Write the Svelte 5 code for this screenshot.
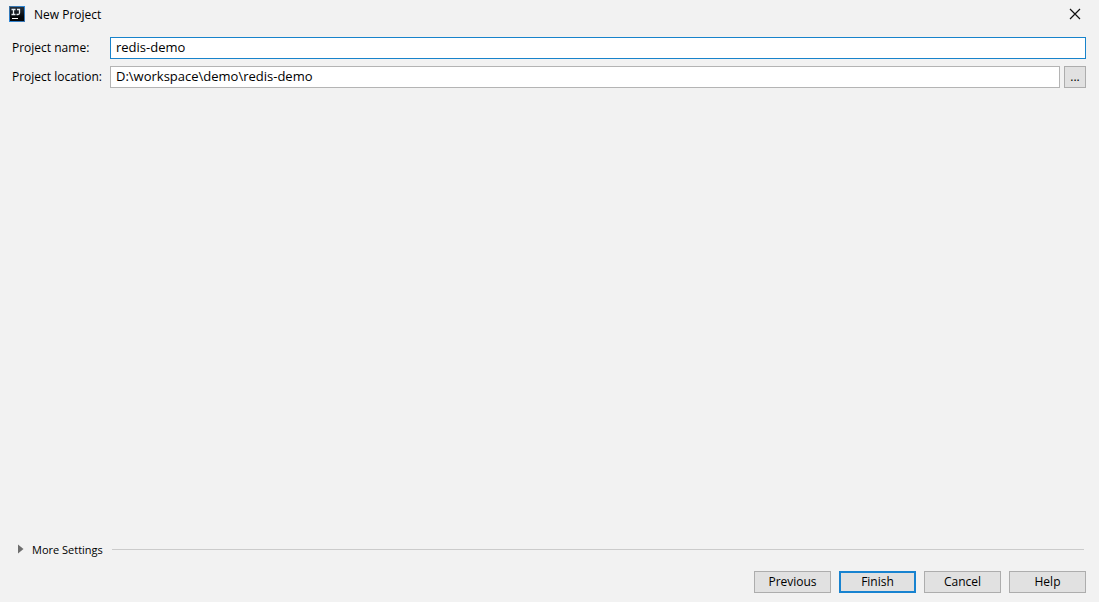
<script>
  let name = $state('redis-demo');
  let location = $state('D:\\workspace\\demo\\redis-demo');
  let expanded = $state(false);
</script>

<main class="dialog">
  <header class="titlebar">
    <svg class="logo" viewBox="0 0 16 16" width="16" height="16" aria-hidden="true">
      <defs>
        <linearGradient id="edge" x1="0" y1="0" x2="1" y2="1">
          <stop offset="0" stop-color="#3f6f9c" />
          <stop offset="0.5" stop-color="#2b86d8" />
          <stop offset="1" stop-color="#3d76b0" />
        </linearGradient>
        <linearGradient id="face" x1="0" y1="0" x2="0" y2="1">
          <stop offset="0" stop-color="#26303c" />
          <stop offset="0.7" stop-color="#05070a" />
        </linearGradient>
      </defs>
      <rect width="16" height="16" fill="url(#edge)" />
      <rect x="1" y="1" width="14" height="14" fill="url(#face)" />
      <path d="M2.500 3.500h4M4.500 3.500v5M2.500 8.500h4M8 3.500h2.500v3.500q0 1.500-1.500 1.500H7.500" fill="none" stroke="#e8edf2" stroke-width="1.300" />
      <rect x="3" y="12" width="6" height="1" fill="#fff" />
    </svg>
    <h1>New Project</h1>
    <button class="close" type="button" aria-label="Close">
      <svg viewBox="0 0 12 12" width="12" height="12" aria-hidden="true">
        <path d="M1 1l10 10M11 1L1 11" fill="none" stroke="#111" stroke-width="1.200" />
      </svg>
    </button>
  </header>

  <form class="fields" onsubmit={(e) => e.preventDefault()}>
    <label for="project-name">Project name:</label>
    <input id="project-name" class="active" type="text" spellcheck="false" bind:value={name} />
    <label for="project-location">Project location:</label>
    <div class="path">
      <input id="project-location" type="text" spellcheck="false" bind:value={location} />
      <button class="btn browse" type="button" aria-label="Browse">...</button>
    </div>
  </form>

  <section class="more">
    <button class="toggle" type="button" aria-expanded={expanded} onclick={() => (expanded = !expanded)}>
      <svg class="arrow" class:open={expanded} viewBox="0 0 6 10" width="6" height="10" aria-hidden="true">
        <path d="M0 0.500L5.500 5L0 9.500Z" fill="#6e6e6e" />
      </svg>
      <span>More Settings</span>
    </button>
    <div class="rule"></div>
  </section>

  <footer class="actions">
    <button class="btn" type="button">Previous</button>
    <button class="btn primary" type="button">Finish</button>
    <button class="btn" type="button">Cancel</button>
    <button class="btn" type="button">Help</button>
  </footer>
</main>

<style>
  :global(body) {
    background: #f2f2f2;
  }
  .dialog {
    box-sizing: border-box;
    display: flex;
    flex-direction: column;
    min-height: 100vh;
    padding-bottom: 9px;
    background: #f2f2f2;
    color: #000;
    font: 12px/18px "Open Sans", "Noto Sans", sans-serif;
  }
  .titlebar {
    display: flex;
    align-items: center;
    gap: 9px;
    height: 28px;
    padding: 0 15px 0 9px;
  }
  .logo,
  .close svg,
  .arrow {
    display: block;
    flex: none;
  }
  h1 {
    flex: 1;
    margin: 0;
    padding-top: 2px;
    font-size: 12px;
    font-weight: 400;
  }
  button {
    font: inherit;
    color: inherit;
    cursor: default;
  }
  .close,
  .toggle {
    padding: 0;
    border: 0;
    background: none;
  }
  .close {
    padding: 3px;
  }
  .fields {
    display: grid;
    grid-template-columns: 98px 1fr;
    row-gap: 7px;
    align-items: center;
    margin: 9px 13px 0 12px;
  }
  .path {
    display: flex;
    gap: 4px;
  }
  input {
    box-sizing: border-box;
    flex: 1;
    min-width: 0;
    width: 100%;
    height: 22px;
    padding: 0 5px 2px;
    border: 1px solid #b4b4b4;
    border-radius: 0;
    outline: 0;
    background: #fff;
    color: #000;
    font: inherit;
    font-size: 13px;
  }
  input.active {
    border-color: #1883cb;
  }
  .btn {
    box-sizing: border-box;
    width: 77px;
    height: 22px;
    padding: 0;
    border: 1px solid #adadad;
    border-radius: 0;
    background: #e1e1e1;
  }
  .btn.browse {
    width: 22px;
  }
  .btn.primary {
    border: 2px solid #1883d0;
  }
  .more {
    display: flex;
    align-items: center;
    gap: 9px;
    margin: auto 15px 0 18px;
  }
  .toggle {
    display: flex;
    align-items: center;
    gap: 8px;
    font-size: 11px;
  }
  .toggle span {
    padding-top: 2px;
  }
  .arrow.open {
    transform: rotate(90deg);
  }
  .rule {
    flex: 1;
    height: 1px;
    background: #cbcbcb;
  }
  .actions {
    display: flex;
    justify-content: flex-end;
    gap: 8px;
    margin: 12px 13px 0;
  }
</style>
